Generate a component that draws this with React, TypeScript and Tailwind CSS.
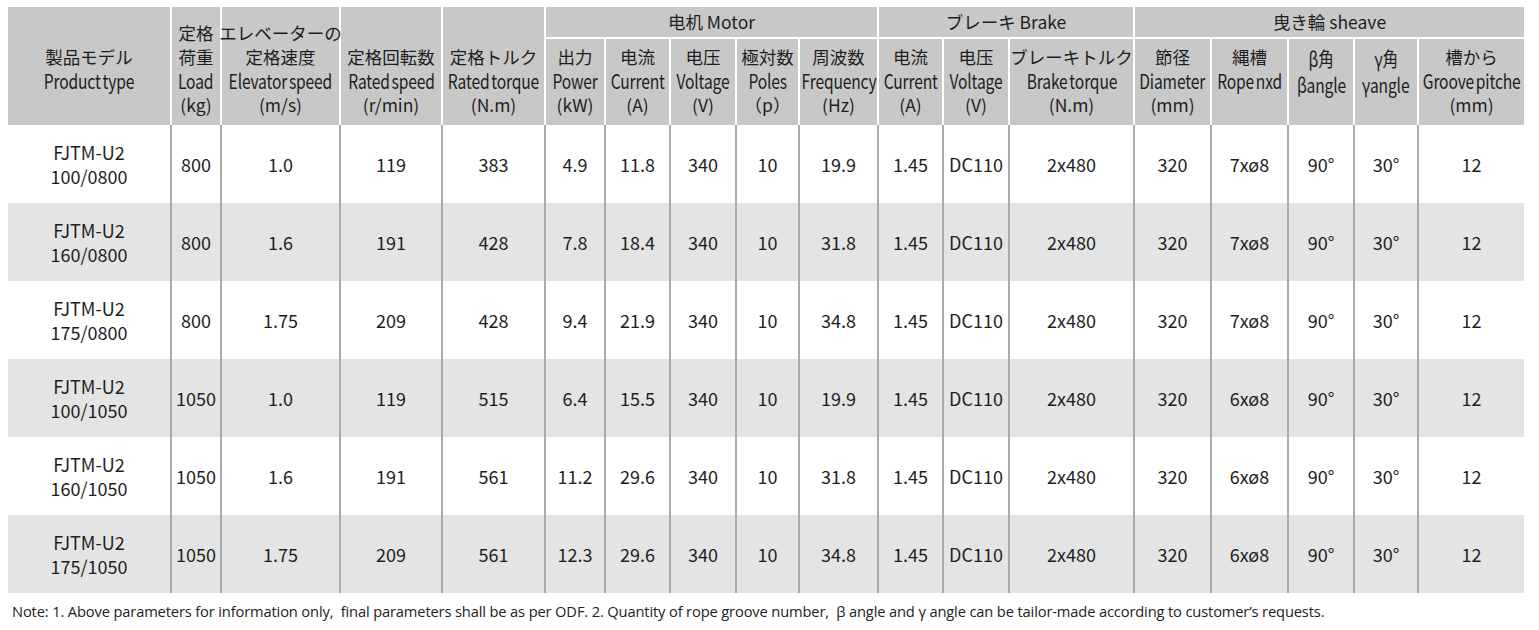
import React from "react";

const font = { fontFamily: '"Noto Sans CJK JP", "Noto Sans", sans-serif' };

type Row = string[];

const rows: Row[] = [
  ["FJTM-U2\n100/0800", "800", "1.0", "119", "383", "4.9", "11.8", "340", "10", "19.9", "1.45", "DC110", "2x480", "320", "7xø8", "90°", "30°", "12"],
  ["FJTM-U2\n160/0800", "800", "1.6", "191", "428", "7.8", "18.4", "340", "10", "31.8", "1.45", "DC110", "2x480", "320", "7xø8", "90°", "30°", "12"],
  ["FJTM-U2\n175/0800", "800", "1.75", "209", "428", "9.4", "21.9", "340", "10", "34.8", "1.45", "DC110", "2x480", "320", "7xø8", "90°", "30°", "12"],
  ["FJTM-U2\n100/1050", "1050", "1.0", "119", "515", "6.4", "15.5", "340", "10", "19.9", "1.45", "DC110", "2x480", "320", "6xø8", "90°", "30°", "12"],
  ["FJTM-U2\n160/1050", "1050", "1.6", "191", "561", "11.2", "29.6", "340", "10", "31.8", "1.45", "DC110", "2x480", "320", "6xø8", "90°", "30°", "12"],
  ["FJTM-U2\n175/1050", "1050", "1.75", "209", "561", "12.3", "29.6", "340", "10", "34.8", "1.45", "DC110", "2x480", "320", "6xø8", "90°", "30°", "12"],
];

// sub headers under the groups: [jp, en, unit]
const subHeads: string[][] = [
  ["出力", "Power", "(kW)"],
  ["电流", "Current", "(A)"],
  ["电压", "Voltage", "(V)"],
  ["極対数", "Poles", "（p）"],
  ["周波数", "Frequency", "(Hz)"],
  ["电流", "Current", "(A)"],
  ["电压", "Voltage", "(V)"],
  ["ブレーキトルク", "Brake torque", "(N.m)"],
  ["節径", "Diameter", "(mm)"],
  ["縄槽", "Rope nxd"],
  ["β角", "βangle"],
  ["γ角", "γangle"],
  ["槽から", "Groove pitche", "(mm)"],
];

// english header words are set large and squeezed, like the original sheet
const En = ({ children, greek }: { children: React.ReactNode; greek?: boolean }) => (
  <span
    className={`inline-block text-[20px] leading-[24px] scale-x-[0.78] tracking-[-0.01em] [word-spacing:-0.1em] whitespace-nowrap ${
      greek ? "mt-[2px]" : ""
    }`}
  >
    {children}
  </span>
);

const Lines = ({ items }: { items: string[] }) => (
  <>
    {items.map((t, i) =>
      /^[A-Za-zβγ]/.test(t) ? (
        <En key={i} greek={/^[βγ]/.test(t)}>
          {t}
        </En>
      ) : (
        <span key={i} className="whitespace-nowrap">{t}</span>
      )
    )}
  </>
);

const grid =
  "grid w-[1516px] grid-cols-[164px_50px_119px_102px_103px_60px_65px_66px_63px_79px_65px_66px_125px_77px_77px_66px_64px_105px]";

export default function App() {
  return (
    <div className="w-[1539px] h-[630px] bg-white text-[#1e1e1e]" style={font}>
      <div className="pt-[7px] pl-[8px]">
        {/* Header */}
        <div className={`${grid} grid-rows-[32px_86px] bg-[#c8c8c8] text-[17.5px] leading-[24px]`}>
          <div className="row-span-2 border-r-2 border-white flex flex-col items-center pt-[38px]">
            <span>製品モデル</span>
            <En>Product type</En>
          </div>
          <div className="row-span-2 border-r-2 border-white flex flex-col items-center pt-[14px]">
            <Lines items={["定格", "荷重", "Load", "(kg)"]} />
          </div>
          <div className="row-span-2 border-r-2 border-white flex flex-col items-center pt-[14px]">
            <Lines items={["エレベーターの", "定格速度", "Elevator speed", "(m/s)"]} />
          </div>
          <div className="row-span-2 border-r-2 border-white flex flex-col items-center pt-[38px]">
            <Lines items={["定格回転数", "Rated speed", "(r/min)"]} />
          </div>
          <div className="row-span-2 border-r-2 border-white flex flex-col items-center pt-[38px]">
            <Lines items={["定格トルク", "Rated torque", "(N.m)"]} />
          </div>
          <div className="col-span-5 border-r-2 border-b-2 border-white flex items-center justify-center">
            电机 Motor
          </div>
          <div className="col-span-3 border-r-2 border-b-2 border-white flex items-center justify-center">
            ブレーキ Brake
          </div>
          <div className="col-span-5 border-b-2 border-white flex items-center justify-center">
            曳き輪 sheave
          </div>
          {subHeads.map((h, i) => (
            <div
              key={i}
              className={`flex flex-col items-center pt-[6px] ${
                i < subHeads.length - 1 ? "border-r-2 border-white" : ""
              }`}
            >
              <Lines items={h} />
            </div>
          ))}
        </div>

        {/* Body */}
        {rows.map((r, ri) => (
          <div
            key={ri}
            className={`${grid} h-[78px] text-[18px] leading-[24px] ${ri % 2 ? "bg-[#e4e4e4]" : "bg-white"}`}
          >
            {r.map((c, ci) => (
              <div
                key={ci}
                className={`flex flex-col items-center justify-center whitespace-nowrap ${
                  ci < r.length - 1 ? "border-r-2 border-[#ababab]" : ""
                }`}
              >
                {c.split("\n").map((l, li) => (
                  <span key={li}>{l}</span>
                ))}
              </div>
            ))}
          </div>
        ))}
      </div>

      <p
        className="pl-[12px] pt-[8px] text-[14.7px] leading-[20px] text-[#222] tracking-[-0.01em]"
        style={{ fontFamily: '"Open Sans", "Noto Sans", sans-serif' }}
      >
        Note: 1. Above parameters for information only,&nbsp; final parameters shall be as per ODF. 2. Quantity of rope
        groove number,&nbsp; β angle and γ angle can be tailor-made according to customer’s requests.
      </p>
    </div>
  );
}
